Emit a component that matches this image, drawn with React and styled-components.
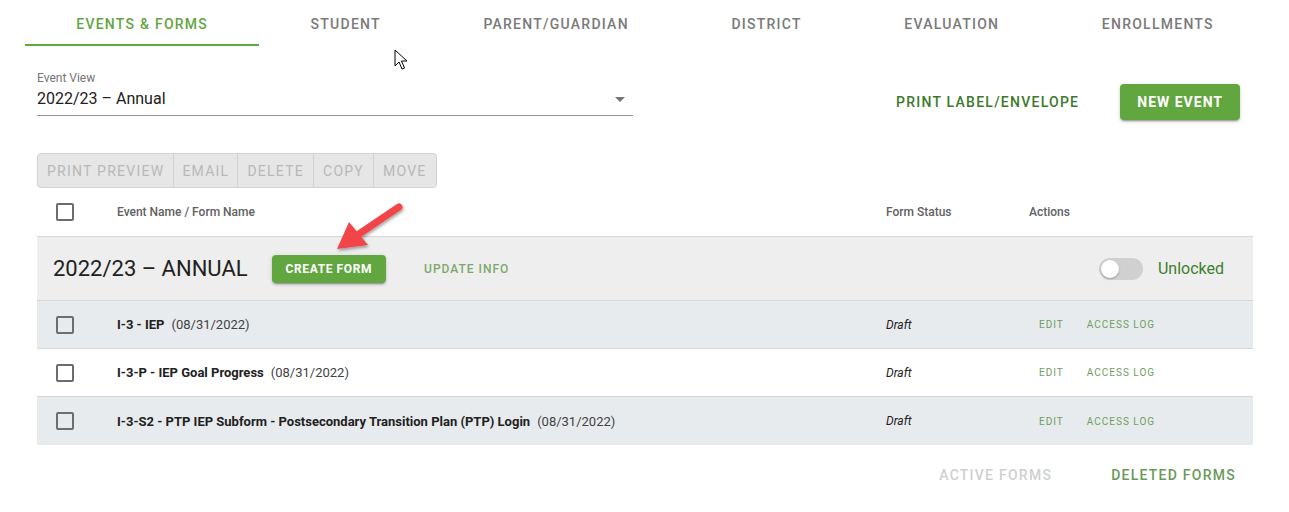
import styled, { createGlobalStyle } from 'styled-components';

const GlobalStyle = createGlobalStyle`
  * { box-sizing: border-box; }
  body {
    margin: 0;
    background: #fff;
    font-family: Roboto, "Noto Sans", Arial, sans-serif;
    color: #212121;
  }
  button { font-family: inherit; }
`;

const GREEN = '#62a63f';

const Page = styled.div`
  position: relative;
  width: 1289px;
  height: 512px;
  overflow: hidden;
`;

const Tabs = styled.nav`
  display: flex;
  height: 46px;
  margin: 0 24px 0 25px;
`;

const Tab = styled.div`
  flex: 1 1 auto;
  display: flex;
  align-items: center;
  justify-content: center;
  padding: 3px 8px 0;
  font-size: 14px;
  font-weight: 500;
  letter-spacing: 1.25px;
  text-transform: uppercase;
  color: ${(p) => (p.$active ? GREEN : '#7a7a7a')};
  border-bottom: 2px solid ${(p) => (p.$active ? GREEN : 'transparent')};
  white-space: nowrap;
`;

const Content = styled.main`
  padding: 0 36px 0 37px;
`;

const FilterRow = styled.div`
  display: flex;
  justify-content: space-between;
  align-items: flex-start;
  padding-top: 24px;
`;

const Select = styled.div`
  width: 596px;
  border-bottom: 1px solid #949494;
  padding-bottom: 3px;
  position: relative;
`;

const SelectLabel = styled.div`
  font-size: 12px;
  line-height: 16px;
  color: #757575;
`;

const SelectValue = styled.div`
  font-size: 16px;
  line-height: 26px;
  color: #212121;
  display: flex;
  justify-content: space-between;
  align-items: center;
`;

const Caret = styled.span`
  width: 0;
  height: 0;
  margin-right: 8px;
  border-left: 5px solid transparent;
  border-right: 5px solid transparent;
  border-top: 5px solid #757575;
`;

const HeaderActions = styled.div`
  display: flex;
  align-items: center;
  gap: 25px;
  margin-top: 14px;
  padding-right: 13px;
`;

const TextButton = styled.button`
  border: 0;
  background: none;
  height: 36px;
  padding: 0 16px;
  font-size: ${(p) => p.$size || 14}px;
  font-weight: 500;
  letter-spacing: ${(p) => (p.$size && p.$size < 14 ? 1 : 1.25)}px;
  text-transform: uppercase;
  color: ${(p) => p.$color || GREEN};
  white-space: nowrap;
`;

const RaisedButton = styled.button`
  border: 0;
  border-radius: 4px;
  background: ${GREEN};
  color: #fff;
  height: ${(p) => p.$h || 36}px;
  padding: 0 ${(p) => p.$px || 17}px;
  font-size: ${(p) => p.$size || 14}px;
  font-weight: 700;
  letter-spacing: ${(p) => (p.$size && p.$size < 14 ? 0.6 : 1)}px;
  text-transform: uppercase;
  box-shadow: 0 3px 1px -2px rgba(0, 0, 0, 0.2), 0 2px 2px 0 rgba(0, 0, 0, 0.14),
    0 1px 5px 0 rgba(0, 0, 0, 0.12);
  white-space: nowrap;
`;

const ButtonGroup = styled.div`
  display: inline-flex;
  margin-top: 33px;
  height: 35px;
  border: 1px solid #d2d2d2;
  border-radius: 4px;
  background: #e6e6e6;
  overflow: hidden;
`;

const GroupItem = styled.div`
  display: flex;
  align-items: center;
  padding: 0 ${(p) => p.$px || 9}px;
  font-size: 14px;
  font-weight: 400;
  letter-spacing: 1.25px;
  text-transform: uppercase;
  color: #b8b8b8;
  & + & {
    border-left: 1px solid #d2d2d2;
  }
`;

const Table = styled.div`
  margin-top: 0;
`;

const Row = styled.div`
  display: grid;
  grid-template-columns: 80px 1fr 143px 224px;
  align-items: center;
  height: ${(p) => p.$h || 48}px;
  background: ${(p) => p.$bg || '#fff'};
  border-bottom: ${(p) => (p.$last ? '0' : '1px solid #d6d6d6')};
`;

const HeadCell = styled.div`
  font-size: 12px;
  font-weight: 500;
  color: #616161;
`;

const Checkbox = styled.span`
  display: block;
  width: 18px;
  height: 18px;
  margin-left: 19px;
  border: 2px solid #6d6d6d;
  border-radius: 2px;
`;

const GroupRow = styled.div`
  display: flex;
  align-items: center;
  height: 64px;
  padding: 0 29px 0 16px;
  background: #eeeeee;
  border-bottom: 1px solid #d6d6d6;
`;

const GroupTitle = styled.h2`
  margin: 0 24px 0 0;
  font-size: 22px;
  font-weight: 400;
  color: #212121;
  text-transform: uppercase;
`;

const Spacer = styled.div`
  flex: 1;
`;

const Switch = styled.span`
  position: relative;
  width: 44px;
  height: 22px;
  border-radius: 11px;
  background: #d0d0d0;
  margin-right: 15px;
  &::after {
    content: '';
    position: absolute;
    left: 2px;
    top: 2px;
    width: 18px;
    height: 18px;
    border-radius: 50%;
    background: #fff;
    box-shadow: 0 1px 2px rgba(0, 0, 0, 0.25);
  }
`;

const SwitchLabel = styled.span`
  font-size: 16px;
  color: #3f7f2f;
`;

const FormName = styled.div`
  font-size: 13px;
  color: #424242;
  white-space: nowrap;
  b {
    font-weight: 700;
    color: #212121;
    margin-right: 7px;
  }
`;

const Status = styled.div`
  font-size: 12px;
  font-style: italic;
  color: #212121;
`;

const Actions = styled.div`
  display: flex;
  align-items: center;
  padding-left: 10px;
  gap: 23px;
`;

const ActionLink = styled.span`
  font-size: 10px;
  font-weight: 400;
  letter-spacing: 1px;
  color: #6f9d5f;
  text-transform: uppercase;
`;

const Footer = styled.div`
  display: flex;
  justify-content: flex-end;
  gap: 27px;
  margin-top: 12px;
  padding-right: 1px;
`;

const Overlay = styled.svg`
  position: absolute;
  left: 0;
  top: 0;
  pointer-events: none;
`;

const forms = [
  { code: 'I-3 - IEP', date: '(08/31/2022)' },
  { code: 'I-3-P - IEP Goal Progress', date: '(08/31/2022)' },
  {
    code: 'I-3-S2 - PTP IEP Subform - Postsecondary Transition Plan (PTP) Login',
    date: '(08/31/2022)',
  },
];

const tabs = ['Events & Forms', 'Student', 'Parent/Guardian', 'District', 'Evaluation', 'Enrollments'];

function App() {
  return (
    <>
      <GlobalStyle />
      <Page>
        <Tabs>
          {tabs.map((t, i) => (
            <Tab key={t} $active={i === 0}>
              {t}
            </Tab>
          ))}
        </Tabs>

        <Content>
          <FilterRow>
            <Select>
              <SelectLabel>Event View</SelectLabel>
              <SelectValue>
                2022/23 – Annual
                <Caret />
              </SelectValue>
            </Select>

            <HeaderActions>
              <TextButton $color="#3c7a2b">Print Label/Envelope</TextButton>
              <RaisedButton>New Event</RaisedButton>
            </HeaderActions>
          </FilterRow>

          <ButtonGroup>
            <GroupItem>Print Preview</GroupItem>
            <GroupItem $px={8}>Email</GroupItem>
            <GroupItem $px={9}>Delete</GroupItem>
            <GroupItem $px={9}>Copy</GroupItem>
            <GroupItem $px={9}>Move</GroupItem>
          </ButtonGroup>

          <Table>
            <Row $h={49}>
              <Checkbox />
              <HeadCell>Event Name / Form Name</HeadCell>
              <HeadCell>Form Status</HeadCell>
              <HeadCell>Actions</HeadCell>
            </Row>

            <GroupRow>
              <GroupTitle>2022/23 – Annual</GroupTitle>
              <RaisedButton $h={28} $px={14} $size={12}>
                Create Form
              </RaisedButton>
              <TextButton $size={12} $color="#7da86b" style={{ marginLeft: 22 }}>
                Update Info
              </TextButton>
              <Spacer />
              <Switch />
              <SwitchLabel>Unlocked</SwitchLabel>
            </GroupRow>

            {forms.map((f, i) => (
              <Row key={f.code} $bg={i % 2 === 0 ? '#e8ebee' : '#fff'} $last={i === forms.length - 1}>
                <Checkbox />
                <FormName>
                  <b>{f.code}</b>
                  {f.date}
                </FormName>
                <Status>Draft</Status>
                <Actions>
                  <ActionLink>Edit</ActionLink>
                  <ActionLink>Access Log</ActionLink>
                </Actions>
              </Row>
            ))}
          </Table>

          <Footer>
            <TextButton $color="#cfcfcf">Active Forms</TextButton>
            <TextButton $color="#6a9a5a">Deleted Forms</TextButton>
          </Footer>
        </Content>

        {/* annotation arrow + mouse cursor */}
        <Overlay width="1289" height="512" viewBox="0 0 1289 512">
          <defs>
            <filter id="shadow" x="-20%" y="-20%" width="140%" height="140%">
              <feDropShadow dx="1" dy="2" stdDeviation="1.5" floodColor="#000" floodOpacity="0.35" />
            </filter>
          </defs>
          <g filter="url(#shadow)">
            <line x1="399" y1="207" x2="356" y2="236" stroke="#f2454a" strokeWidth="7" strokeLinecap="round" />
            <polygon points="337,249 349,222 368,245" fill="#f2454a" />
          </g>
          <path
            d="M395 50 L395 66 L399 62 L402 69 L404.5 68 L401.5 61 L407 61 Z"
            fill="#fff"
            stroke="#000"
            strokeWidth="1"
            strokeLinejoin="round"
          />
        </Overlay>
      </Page>
    </>
  );
}

export default App;
